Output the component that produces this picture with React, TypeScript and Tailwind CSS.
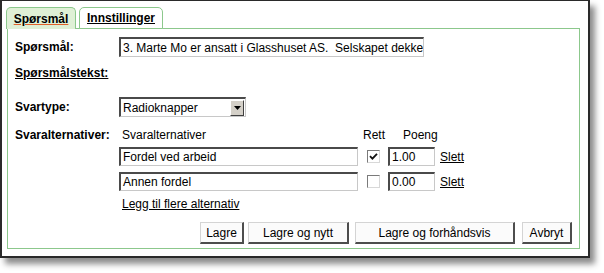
import React from 'react';

const font = { fontFamily: '"Liberation Sans", Arial, sans-serif' };

const inset =
  'bg-white border-t-2 border-l-2 border-t-[#4a4a4a] border-l-[#4a4a4a] border-r border-b border-r-[#c8c8c8] border-b-[#c8c8c8]';

const btn =
  'h-[22px] bg-[#fbfbfb] border-t border-l border-t-[#d4d4d4] border-l-[#d4d4d4] border-r-2 border-b-2 border-r-[#4d4d4d] border-b-[#4d4d4d] text-[12px] text-black flex items-center justify-center';

function Checkbox({ checked }: { checked: boolean }) {
  return (
    <div className="w-[13px] h-[13px] bg-white border border-t-[#7a7a7a] border-l-[#7a7a7a] border-r-[#d8d8d8] border-b-[#d8d8d8] flex items-center justify-center">
      {checked && (
        <svg width="9" height="9" viewBox="0 0 9 9">
          <path d="M1 4.2 L3.4 6.6 L8 1.8" stroke="#111" strokeWidth="1.8" fill="none" />
        </svg>
      )}
    </div>
  );
}

function AltRow({ text, checked, points }: { text: string; checked: boolean; points: string }) {
  return (
    <div className="flex items-center h-[19px]">
      <div className={`${inset} w-[239px] h-[19px] flex items-center pl-[2px] text-[12px]`}>{text}</div>
      <div className="w-[30px] flex justify-center">
        <Checkbox checked={checked} />
      </div>
      <div className={`${inset} w-[47px] h-[19px] flex items-center pl-[2px] text-[12px]`}>{points}</div>
      <a className="ml-[5px] text-[12px] underline text-black">Slett</a>
    </div>
  );
}

export default function App() {
  return (
    <div className="w-[604px] h-[273px] bg-white text-black" style={font}>
      <div className="w-[590px] h-[258px] bg-white border-2 border-t border-[#2a2a2a] shadow-[5px_6px_6px_rgba(0,0,0,0.45)] pl-[4px] pr-[8px] pt-[6px]">
        {/* tabs */}
        <div className="flex items-end gap-[3px] h-[22px] relative z-10">
          <div className="w-[70px] h-[22px] rounded-t-[5px] border border-b-0 border-[#8cc88c] bg-[#dff0d6] flex items-center justify-center">
            <span className="text-[12px] font-bold underline decoration-[#e0602a]">Spørsmål</span>
          </div>
          <div className="w-[84px] h-[22px] rounded-t-[5px] border border-[#8cc88c] bg-white flex items-center justify-center">
            <span className="text-[12px] font-bold underline">Innstillinger</span>
          </div>
        </div>
        {/* panel */}
        <div className="ml-[1px] -mt-px h-[221px] border border-[#8cc88c] pl-[7px] pr-[7px] pt-[8px] flex flex-col">
          <div className="flex items-center h-[20px]">
            <div className="w-[104px] text-[12px] font-bold">Spørsmål:</div>
            <div className={`${inset} w-[305px] h-[20px] flex items-center pl-[2px] text-[12px] whitespace-pre overflow-hidden`}>
              3. Marte Mo er ansatt i Glasshuset AS.  Selskapet dekker
            </div>
          </div>
          <div className="flex items-center h-[20px] mt-[6px]">
            <span className="text-[12px] font-bold underline">Spørsmålstekst:</span>
          </div>
          <div className="flex items-center h-[20px] mt-[14px]">
            <div className="w-[104px] text-[12px] font-bold">Svartype:</div>
            <div className={`${inset} w-[127px] h-[20px] flex items-center justify-between text-[12px]`}>
              <span className="pl-[2px]">Radioknapper</span>
              <div className="w-[14px] h-[16px] mr-[1px] bg-[#d4d0c8] border-t border-l border-t-white border-l-white border-r border-b border-r-[#404040] border-b-[#404040] flex items-center justify-center">
                <svg width="7" height="4" viewBox="0 0 7 4">
                  <path d="M0 0 H7 L3.5 4 Z" fill="#000" />
                </svg>
              </div>
            </div>
          </div>
          <div className="flex items-start mt-[10px]">
            <div className="w-[104px] text-[12px] font-bold -mt-[1px]">Svaralternativer:</div>
            <div className="flex flex-col">
              <div className="flex items-center h-[16px] text-[12px]">
                <span className="w-[244px] pl-[3px]">Svaralternativer</span>
                <span className="w-[40px]">Rett</span>
                <span>Poeng</span>
              </div>
              <div className="mt-[4px] flex flex-col gap-[6px]">
                <AltRow text="Fordel ved arbeid" checked={true} points="1.00" />
                <AltRow text="Annen fordel" checked={false} points="0.00" />
              </div>
              <div className="mt-[5px] h-[16px] flex items-center pl-[3px]">
                <a className="text-[12px] underline">Legg til flere alternativ</a>
              </div>
            </div>
          </div>
          <div className="flex justify-end mt-[10px] pr-[0px]">
            <button className={`${btn} w-[44px]`}>Lagre</button>
            <button className={`${btn} w-[101px] ml-[4px]`}>Lagre og nytt</button>
            <button className={`${btn} w-[160px] ml-[6px]`}>Lagre og forhåndsvis</button>
            <button className={`${btn} w-[50px] ml-[7px]`}>Avbryt</button>
          </div>
        </div>
      </div>
    </div>
  );
}
